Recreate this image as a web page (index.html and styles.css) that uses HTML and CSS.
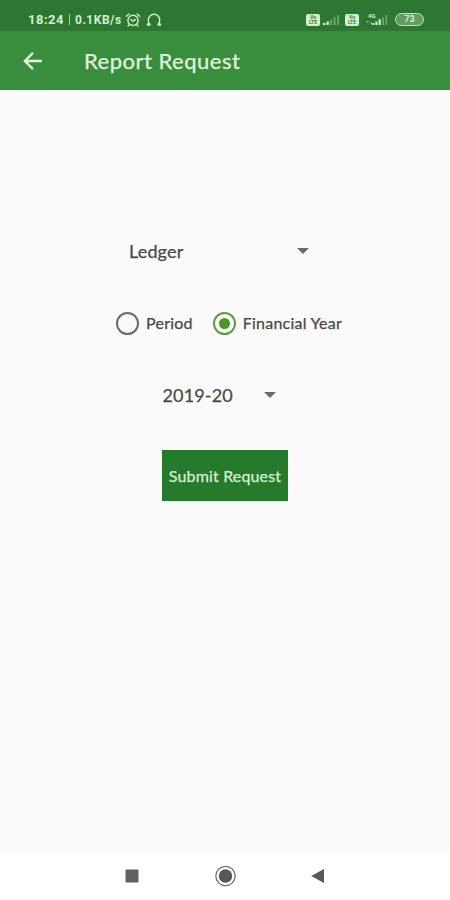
FILE: index.html
```
<!DOCTYPE html>
<html lang="en">
<head>
    <meta charset="UTF-8">
    <meta name="viewport" content="width=device-width, initial-scale=1.0">
    <title>Report Request</title>
    <link rel="stylesheet" href="styles.css">
</head>
<body>
    <div class="status-bar">
        <div class="status-left">
            <span class="time">18:24</span>
            <span class="divider"></span>
            <span class="speed">0.1KB/s</span>
            <svg class="alarm" width="16" height="16" viewBox="0 0 16 16" fill="none" stroke="currentColor" stroke-width="1.4" stroke-linecap="round">
                <circle cx="8" cy="8.4" r="5.1"/>
                <path d="M1.4 4.2 4 1.9M14.6 4.2 12 1.9M5.8 7.6 8 9.2l2.3-1.6M4.2 12.6 3 14M11.8 12.6 13 14"/>
            </svg>
            <svg class="headset" width="16" height="16" viewBox="0 0 16 16" fill="none" stroke="currentColor" stroke-width="1.4" stroke-linecap="round">
                <path d="M3.6 12.6C2.6 11.2 2.3 9.6 2.3 8a5.7 5.7 0 0 1 11.4 0c0 1.6-.3 3.2-1.3 4.6"/>
                <path d="M2 12.5h1.4M12.6 12.5h1.4" stroke-width="2.6"/>
            </svg>
        </div>
        <div class="status-right">
            <span class="volte"><span>Vo</span><span>LTE</span></span>
            <svg class="signal" width="17" height="14" viewBox="0 0 17 14" fill="currentColor">
                <path d="M0 10h2.4v2H0zM3.5 8.5h2.4V12H3.5z"/>
                <path opacity=".35" d="M7 6.5h2.2V12H7zM10.5 4.3h2.2V12h-2.2zM14 2h2.2v10H14z"/>
            </svg>
            <span class="volte"><span>Vo</span><span>LTE</span></span>
            <span class="network">
                <span class="network-type">4G</span>
                <svg width="22" height="14" viewBox="0 0 22 14" fill="currentColor">
                    <path opacity=".6" d="M0 8h3L1.5 10zM3.5 10.5h2.5L4.7 8.8z"/>
                    <path d="M6 10h2.2v2H6zM9.3 8.5h2.2V12H9.3zM12.6 6.3h2.2V12h-2.2z"/>
                    <path opacity=".35" d="M16 4.3h2V12h-2zM19.3 2h2v10h-2z"/>
                </svg>
            </span>
            <span class="battery">73</span>
        </div>
    </div>

    <header class="app-bar">
        <svg class="back" width="24" height="24" viewBox="0 0 24 24" fill="none" stroke="currentColor" stroke-width="2.4">
            <path d="M21 12H4M12 3.8 3.8 12l8.2 8.2"/>
        </svg>
        <h1 class="title">Report Request</h1>
    </header>

    <main class="form">
        <div class="select select-report">
            <span>Ledger</span>
            <i class="arrow"></i>
        </div>
        <div class="radios">
            <div class="radio">
                <i class="dot"></i>
                <span>Period</span>
            </div>
            <div class="radio">
                <i class="dot checked"></i>
                <span>Financial Year</span>
            </div>
        </div>
        <div class="select select-year">
            <span>2019-20</span>
            <i class="arrow"></i>
        </div>
        <button class="submit">Submit Request</button>
    </main>

    <nav class="nav-bar">
        <svg width="14" height="24" viewBox="0 0 14 24"><path fill="#606060" d="M.5 5.5h13v13H.5z"/></svg>
        <svg width="24" height="24" viewBox="0 0 24 24">
            <circle cx="12.5" cy="12" r="9.7" fill="none" stroke="#707070" stroke-width="1.3"/>
            <circle cx="12.5" cy="12" r="6.7" fill="#585858"/>
        </svg>
        <svg width="14" height="24" viewBox="0 0 14 24"><path fill="#585858" d="M13 5v14L.2 12z"/></svg>
    </nav>
</body>
</html>
```
FILE: styles.css
```
* {
    padding: 0;
    margin: 0;
    box-sizing: border-box;
}
body {
    width: 450px;
    height: 900px;
    display: flex;
    flex-direction: column;
    background-color: #fafafa;
    font-family: Lato, "Open Sans", sans-serif;
    color: #484848;
    -webkit-text-stroke: 0.25px;
    overflow: hidden;
}

/* status bar */
.status-bar {
    height: 31px;
    padding: 8px 26px 0 28px;
    display: flex;
    justify-content: space-between;
    background-color: #2e7730;
    color: #d3efd0;
    font-family: Roboto, sans-serif;
    -webkit-text-stroke: 0;
}
.status-left,
.status-right {
    height: 23px;
    display: flex;
    align-items: center;
}
.time {
    font-size: 13px;
    font-weight: bold;
    letter-spacing: 0.5px;
}
.divider {
    width: 1px;
    height: 11px;
    margin: 0 5px;
    background-color: #a9d3a7;
}
.speed {
    width: 48px;
    font-size: 12px;
    font-weight: bold;
    letter-spacing: 0.5px;
}
.alarm {
    margin-left: 2px;
}
.headset {
    margin-left: 5px;
}
.volte {
    width: 14px;
    height: 12px;
    display: flex;
    flex-direction: column;
    align-items: center;
    justify-content: center;
    border-radius: 2px;
    background-color: #d3efd0;
    color: #3c7d3d;
    font-size: 5px;
    font-weight: bold;
    line-height: 5px;
}
.signal {
    margin: 0 5px 0 3px;
}
.network {
    position: relative;
    height: 14px;
    margin: 0 7px;
}
.network svg {
    display: block;
}
.network-type {
    position: absolute;
    left: 2px;
    top: 0;
    font-size: 6px;
    font-weight: bold;
    line-height: 6px;
}
.battery {
    width: 29px;
    height: 13px;
    border: 1.5px solid #c3e3c0;
    border-radius: 7px;
    background-color: #629c62;
    font-size: 9px;
    font-weight: bold;
    line-height: 11px;
    text-align: center;
}

/* app bar */
.app-bar {
    height: 59px;
    padding: 0 21px;
    display: flex;
    align-items: center;
    background-color: #388e3c;
    color: #e2f5df;
}
.title {
    margin-left: 39px;
    font-size: 22px;
    font-weight: 400;
    letter-spacing: 0.5px;
}

/* form */
.form {
    flex: 1;
    padding-top: 142px;
    display: flex;
    flex-direction: column;
    align-items: center;
}
.select {
    height: 38px;
    display: flex;
    align-items: center;
    justify-content: space-between;
    font-size: 18px;
    letter-spacing: 0.15px;
}
.select-report {
    width: 180px;
    margin-left: -12px;
}
.select-year {
    width: 113px;
    margin-left: -12px;
    margin-top: 34px;
}
.arrow {
    border: 6px solid transparent;
    border-top-color: #6b6b6b;
    border-bottom: 0;
}
.radios {
    width: 226px;
    height: 38px;
    margin-top: 34px;
    margin-left: 8px;
    display: flex;
    justify-content: space-between;
}
.radio {
    display: flex;
    align-items: center;
    gap: 7px;
    font-size: 16px;
    letter-spacing: 0.25px;
}
.radio span {
    padding-bottom: 2px;
}
.dot {
    width: 23px;
    height: 23px;
    border: 2px solid #6a6a6a;
    border-radius: 50%;
}
.dot.checked {
    padding: 4px;
    border-color: #5f9a45;
    background: #4a9629 content-box;
}
.submit {
    width: 126px;
    height: 51px;
    margin-top: 36px;
    padding-bottom: 1px;
    border: 0;
    background-color: #267a2b;
    color: #d9f0d6;
    font-family: inherit;
    font-size: 16px;
    letter-spacing: 0.15px;
    white-space: nowrap;
}

/* navigation bar */
.nav-bar {
    height: 48px;
    padding: 0 125px;
    display: flex;
    align-items: center;
    justify-content: space-between;
    background-color: #fff;
}
```
